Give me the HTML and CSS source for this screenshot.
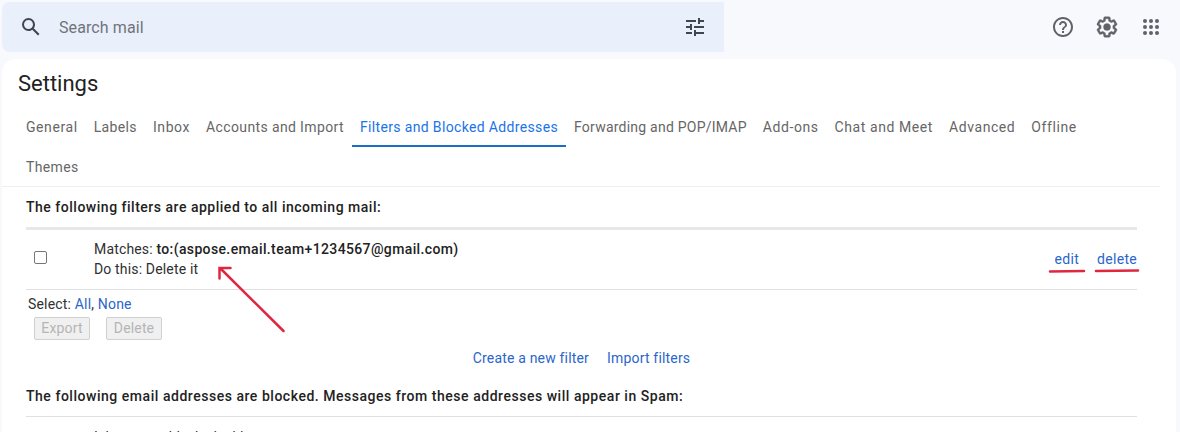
FILE: index.html
```html
<!DOCTYPE html>
<html lang="en">
<head>
<meta charset="utf-8">
<title>Settings</title>
<link rel="stylesheet" href="styles.css">
</head>
<body>
<header class="topbar">
  <div class="search">
    <svg class="icon" viewBox="0 0 24 24"><path d="M20.49 19l-5.73-5.73C15.53 12.2 16 10.91 16 9.5A6.5 6.5 0 1 0 9.5 16c1.41 0 2.7-.47 3.77-1.24L19 20.49 20.49 19zM5 9.5C5 7.01 7.01 5 9.5 5S14 7.01 14 9.5 11.99 14 9.5 14 5 11.99 5 9.5z"/></svg>
    <span class="placeholder">Search mail</span>
    <svg class="icon" viewBox="0 0 24 24"><path d="M3 17v2h6v-2H3zM3 5v2h10V5H3zm10 16v-2h8v-2h-8v-2h-2v6h2zM7 9v2H3v2h4v2h2V9H7zm14 4v-2H11v2h10zm-6-4h2V7h4V5h-4V3h-2v6z"/></svg>
  </div>
  <div class="tools">
    <svg class="icon" viewBox="0 0 24 24"><path d="M11 18h2v-2h-2v2zm1-16C6.48 2 2 6.48 2 12s4.48 10 10 10 10-4.48 10-10S17.52 2 12 2zm0 18c-4.41 0-8-3.59-8-8s3.59-8 8-8 8 3.59 8 8-3.59 8-8 8zm0-14c-2.21 0-4 1.79-4 4h2c0-1.1.9-2 2-2s2 .9 2 2c0 2-3 1.75-3 5h2c0-2.25 3-2.5 3-5 0-2.21-1.79-4-4-4z"/></svg>
    <svg class="icon gear" viewBox="0 0 24 24"><path d="M13.85 22.25h-3.7c-.74 0-1.36-.54-1.45-1.27l-.27-1.89c-.27-.14-.53-.29-.79-.46l-1.8.72c-.7.26-1.47-.03-1.81-.65L2.2 15.53c-.35-.66-.2-1.44.36-1.88l1.53-1.19c-.01-.15-.02-.3-.02-.46 0-.15.01-.31.02-.46l-1.52-1.19c-.59-.45-.74-1.26-.37-1.88l1.85-3.19c.34-.62 1.11-.9 1.79-.63l1.81.73c.26-.17.52-.32.78-.46l.27-1.91c.09-.7.71-1.25 1.44-1.25h3.7c.74 0 1.36.54 1.45 1.27l.27 1.89c.27.14.53.29.79.46l1.8-.72c.71-.26 1.48.03 1.82.65l1.84 3.18c.36.66.2 1.44-.36 1.88l-1.52 1.19c.01.15.02.3.02.46s-.01.31-.02.46l1.52 1.19c.56.45.72 1.23.37 1.86l-1.86 3.22c-.34.62-1.11.9-1.8.63l-1.8-.72c-.26.17-.52.32-.78.46l-.27 1.91c-.1.68-.72 1.22-1.46 1.22zm-3.23-2h2.76l.37-2.55.53-.22c.44-.18.88-.44 1.34-.78l.45-.34 2.38.96 1.38-2.4-2.03-1.58.07-.56c.03-.26.06-.51.06-.78s-.03-.53-.06-.78l-.07-.56 2.03-1.58-1.39-2.4-2.39.96-.45-.35c-.42-.32-.87-.58-1.33-.77l-.52-.22-.37-2.55h-2.76l-.37 2.55-.53.21c-.44.19-.88.44-1.34.79l-.45.33-2.38-.95-1.39 2.39 2.03 1.58-.07.56a7 7 0 0 0-.06.79c0 .26.02.53.06.78l.07.56-2.03 1.58 1.38 2.4 2.39-.96.45.35c.43.33.86.58 1.33.77l.53.22.38 2.55z"/><circle cx="12" cy="12" r="3.500"/></svg>
    <svg class="icon" viewBox="0 0 24 24"><g><circle cx="6" cy="6" r="2"/><circle cx="12" cy="6" r="2"/><circle cx="18" cy="6" r="2"/><circle cx="6" cy="12" r="2"/><circle cx="12" cy="12" r="2"/><circle cx="18" cy="12" r="2"/><circle cx="6" cy="18" r="2"/><circle cx="12" cy="18" r="2"/><circle cx="18" cy="18" r="2"/></g></svg>
  </div>
</header>
<main class="panel">
  <h1 class="title">Settings</h1>
  <nav class="tabs">
    <a class="tab wide">General</a><a class="tab">Labels</a><a class="tab wide">Inbox</a><a class="tab">Accounts and Import</a><a class="tab active">Filters and Blocked Addresses</a><a class="tab tight">Forwarding and POP/IMAP</a><a class="tab wide">Add-ons</a><a class="tab wide">Chat and Meet</a><a class="tab wide">Advanced</a><a class="tab wide">Offline</a><a class="tab">Themes</a>
  </nav>
  <section class="content">
    <h2 class="heading filters-heading">The following filters are applied to all incoming mail:</h2>
    <div class="filter">
      <span class="check"></span>
      <div class="rule">
        <div class="match">Matches: <b class="address">to:(aspose.email.team+1234567@gmail.com)</b></div>
        <div class="action">Do this: Delete it</div>
      </div>
      <a class="link edit">edit</a>
      <a class="link delete">delete</a>
    </div>
    <div class="select">Select: <a class="link">All</a>, <a class="link">None</a></div>
    <div class="buttons"><span class="button export">Export</span><span class="button">Delete</span></div>
    <div class="create"><a class="link">Create a new filter</a><a class="link">Import filters</a></div>
    <h2 class="heading blocked-heading">The following email addresses are blocked. Messages from these addresses will appear in Spam:</h2>
    <div class="empty">It has some blocked addresses</div>
  </section>
</main>
<svg class="marks" viewBox="0 0 1180 432"><path d="M283.500 331L220 268M219.500 278.500V268H230.500"/><path d="M1050 271.500L1084 271M1096 271L1138 270.500"/></svg>
</body>
</html>
```
FILE: styles.css
```css
* { box-sizing: border-box; }
body { margin: 0; height: 432px; overflow: hidden; background: #f7f9fd; font: 14px/20px Roboto, "Liberation Sans", sans-serif; letter-spacing: .16px; color: #303030; }
.topbar { height: 59px; display: flex; align-items: flex-start; justify-content: space-between; padding: 2px 17px 0 2px; }
.search { width: 722px; height: 50px; border-radius: 8px 0 0 8px; background: #e9f0fb; display: flex; align-items: center; padding: 0 17px; color: #41454d; }
.icon { width: 24px; height: 24px; fill: currentColor; flex: none; }
.gear { stroke: currentColor; stroke-width: .4; }
.placeholder { flex: 1; margin-left: 16px; padding-top: 2px; font-size: 16px; color: #70747a; letter-spacing: .1px; }
.tools { display: flex; gap: 20px; padding-top: 13px; color: #5f6368; }
.panel { margin: 0 4px 0 2px; height: 373px; overflow: hidden; background: #fff; border-radius: 14px 14px 0 0; }
.title { margin: 0; padding: 10px 16px 0; height: 48px; font-weight: 400; font-size: 22px; line-height: 30px; letter-spacing: 0; color: #222; }
.tabs { display: flex; flex-wrap: wrap; align-content: flex-start; padding: 0 60px 0 16px; height: 80px; width: 1158px; border-bottom: 1px solid #efefef; color: #666; }
.tab { height: 40px; padding: 10px 8px 0; letter-spacing: .37px; white-space: nowrap; }
.wide { letter-spacing: .58px; }
.tight { letter-spacing: .23px; }
.active { letter-spacing: .35px; color: #1a73e8; border-bottom: 2px solid #1a6ec5; }
.content { width: 1135px; padding-left: 24px; }
.heading { margin: 0; font-size: 14px; line-height: 20px; font-weight: 500; letter-spacing: .53px; color: #222; }
.filters-heading { padding-top: 10px; height: 43px; border-bottom: 3px solid #e8e8e8; letter-spacing: .51px; }
.filter { display: flex; height: 60px; padding-top: 9px; border-bottom: 1px solid #e0e0e0; }
.check { width: 13px; height: 13px; margin: 12px 47px 0 8px; border: 1px solid #767676; border-radius: 2px; }
.rule { flex: 1; }
.address { font-weight: 500; letter-spacing: .37px; color: #222; }
.link { color: #2a66cb; }
.filter .link { padding-top: 10px; letter-spacing: .3px; }
.edit { margin-right: 18px; }
.select { padding: 4px 2px 0; height: 27px; letter-spacing: .18px; }
.buttons { display: flex; gap: 16px; padding-left: 8px; height: 31px; }
.button { height: 23px; width: 56px; border: 1px solid #d0d0d0; border-radius: 2px; background: #f0f0f0; color: #b5b5b5; text-align: center; line-height: 21px; }
.create { display: flex; gap: 18px; justify-content: center; letter-spacing: .18px; }
.blocked-heading { padding-top: 18px; height: 49px; border-bottom: 1px solid #e0e0e0; }
.empty { padding: 10px 0 0 68px; letter-spacing: -.12px; }
.marks { position: absolute; left: 0; top: 0; width: 1180px; height: 432px; fill: none; stroke: #df2740; stroke-width: 2.500; stroke-linecap: round; pointer-events: none; }
```
